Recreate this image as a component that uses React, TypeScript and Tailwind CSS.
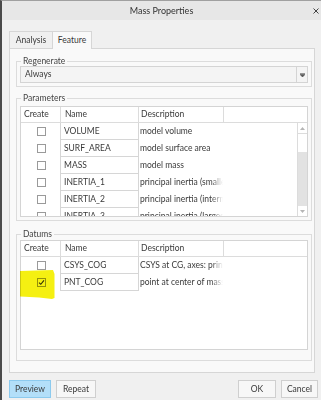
import React from "react";

type Row = { name: string; desc: string; checked?: boolean };

const params: Row[] = [
  { name: "VOLUME", desc: "model volume" },
  { name: "SURF_AREA", desc: "model surface area" },
  { name: "MASS", desc: "model mass" },
  { name: "INERTIA_1", desc: "principal inertia (smallest)" },
  { name: "INERTIA_2", desc: "principal inertia (intermediate)" },
  { name: "INERTIA_3", desc: "principal inertia (largest)" },
];

const datums: Row[] = [
  { name: "CSYS_COG", desc: "CSYS at CG, axes: principal" },
  { name: "PNT_COG", desc: "point at center of mass", checked: true },
];

function Checkbox({ checked }: { checked?: boolean }) {
  return (
    <div className="w-[9px] h-[9px] border border-[#9a9a9a] bg-white flex items-center justify-center">
      {checked && (
        <svg width="7" height="7" viewBox="0 0 7 7">
          <path d="M1 3.6 L2.8 5.3 L6 1.4" fill="none" stroke="#333" strokeWidth="1.1" />
        </svg>
      )}
    </div>
  );
}

function Header() {
  return (
    <div className="h-[16px] shrink-0 flex border-b border-[#dcdcdc] leading-[15px]">
      <div className="w-[39px] pl-[3px]">Create</div>
      <div className="w-[79px] border-l border-r border-[#dcdcdc] pl-[4px]">Name</div>
      <div className="w-[85px] border-r border-[#dcdcdc] pl-[2px]">Description</div>
      <div className="flex-1" />
    </div>
  );
}

function TableRow({ r }: { r: Row }) {
  return (
    <div className="h-[17px] flex shrink-0">
      <div className="w-[39px] pl-[16px] flex items-center">
        <Checkbox checked={r.checked} />
      </div>
      <div className="w-[79px] border-l border-r border-b border-[#d6d6d6] pl-[3px] leading-[16px] whitespace-nowrap overflow-hidden">
        {r.name}
      </div>
      <div className="w-[84px] pl-[1px] leading-[17px] whitespace-nowrap overflow-hidden [mask-image:linear-gradient(to_right,#000_86%,transparent)]">
        {r.desc}
      </div>
    </div>
  );
}

function Scrollbar() {
  return (
    <div className="w-[10px] shrink-0 border-l border-[#dcdcdc] flex flex-col">
      <div className="h-[10px] flex items-center justify-center">
        <svg width="5" height="3" viewBox="0 0 5 3">
          <path d="M0 3 L2.5 0 L5 3 Z" fill="#b5b5b5" />
        </svg>
      </div>
      <div className="h-[19px] bg-white border-t border-[#dcdcdc]" />
      <div className="flex-1 bg-[#e2e2e2]" />
      <div className="h-[10px] flex items-center justify-center">
        <svg width="5" height="3" viewBox="0 0 5 3">
          <path d="M0 0 L2.5 3 L5 0 Z" fill="#b5b5b5" />
        </svg>
      </div>
    </div>
  );
}

function Legend({ children }: { children: React.ReactNode }) {
  return <legend className="ml-[1px] px-[2px] leading-[10px] text-[#444]">{children}</legend>;
}

function Button({ children, primary, w }: { children: React.ReactNode; primary?: boolean; w: string }) {
  return (
    <div
      className={
        "h-[18px] border flex items-center justify-center leading-[16px] " +
        w +
        (primary ? " bg-[#b3dff9] border-[#8ccaee]" : " bg-[#f7f7f7] border-[#cfcfcf]")
      }
    >
      {children}
    </div>
  );
}

export default function App() {
  return (
    <div className="relative w-[321px] h-[400px] overflow-hidden bg-[#f0f0f0] border-l-2 border-l-[#4a4a4a] border-t border-t-[#a0a0a0] flex flex-col text-[8.5px] text-[#3a3a3a] [font-family:Lato,sans-serif]">
      {/* Title bar */}
      <div className="h-[19px] shrink-0 bg-[#e7e7e7] flex items-center justify-center relative">
        <span className="text-[9px] text-[#333]">Mass Properties</span>
        <svg className="absolute left-[311px] top-[7px]" width="6" height="6" viewBox="0 0 6 6">
          <path d="M0.5 0.5 L5.5 5.5 M5.5 0.5 L0.5 5.5" stroke="#444" strokeWidth="1" />
        </svg>
      </div>

      {/* Tabs */}
      <div className="mt-[11px] pl-[7px] flex h-[17px] shrink-0">
        <div className="w-[43px] h-[17px] border-l border-t border-[#d6d6d6] bg-[#f0f0f0] flex items-center justify-center">
          Analysis
        </div>
        <div className="relative z-10 w-[40px] h-[18px] border-l border-t border-r border-[#d6d6d6] bg-[#f9f9f9] flex items-center justify-center pb-[1px]">
          Feature
        </div>
      </div>

      {/* Panel */}
      <div className="ml-[7px] w-[306px] h-[325px] shrink-0 border border-[#d6d6d6] bg-[#f9f9f9] flex flex-col">
        <fieldset className="ml-[6px] mt-[7px] w-[296px] border border-[#dcdcdc] px-[3px] pb-[3px]">
          <Legend>Regenerate</Legend>
          <div className="h-[17px] w-full border border-[#d4d4d4] bg-[#f4f4f4] flex">
            <div className="flex-1 pl-[4px] leading-[15px]">Always</div>
            <div className="w-[11px] border-l border-[#d4d4d4] flex items-center justify-center">
              <svg width="5" height="4" viewBox="0 0 5 4">
                <path d="M0 0.5 H5 M0 1.5 L2.5 4 L5 1.5 Z" fill="#555" stroke="#555" strokeWidth="0.6" />
              </svg>
            </div>
          </div>
        </fieldset>

        <fieldset className="ml-[6px] mt-[6px] w-[296px] border border-[#dcdcdc] px-[3px] pt-[3px] pb-[3px]">
          <Legend>Parameters</Legend>
          <div className="w-full h-[111px] border border-[#d4d4d4] bg-white flex flex-col overflow-hidden">
            <Header />
            <div className="flex flex-1 min-h-0">
              <div className="flex-1 overflow-hidden flex flex-col">
                {params.map((r) => (
                  <TableRow key={r.name} r={r} />
                ))}
              </div>
              <Scrollbar />
            </div>
          </div>
        </fieldset>

        <fieldset className="ml-[6px] mt-[8px] w-[296px] border border-[#dcdcdc] px-[3px] pt-[1px] pb-[10px]">
          <Legend>Datums</Legend>
          <div className="w-full h-[110px] border border-[#d4d4d4] bg-white flex flex-col overflow-hidden">
            <Header />
            <div className="flex flex-col">
              {datums.map((r) => (
                <TableRow key={r.name} r={r} />
              ))}
            </div>
          </div>
        </fieldset>
      </div>

      {/* Buttons */}
      <div className="mt-[7px] pl-[7px] pr-[3px] flex justify-between">
        <div className="flex gap-[5px]">
          <Button primary w="w-[42px]">Preview</Button>
          <Button w="w-[40px]">Repeat</Button>
        </div>
        <div className="flex gap-[5px]">
          <Button w="w-[38px]">OK</Button>
          <Button w="w-[37px]">Cancel</Button>
        </div>
      </div>

      {/* Yellow highlighter mark */}
      <svg
        className="absolute left-[17px] top-[267px] mix-blend-multiply pointer-events-none"
        width="37"
        height="32"
        viewBox="0 0 37 32"
      >
        <path
          d="M1 3 L34 2 L35.5 6 L35.5 30 L33 31 L20 29.5 L6 28.8 L1 28.5 Z"
          fill="#f5f012"
        />
      </svg>
    </div>
  );
}
